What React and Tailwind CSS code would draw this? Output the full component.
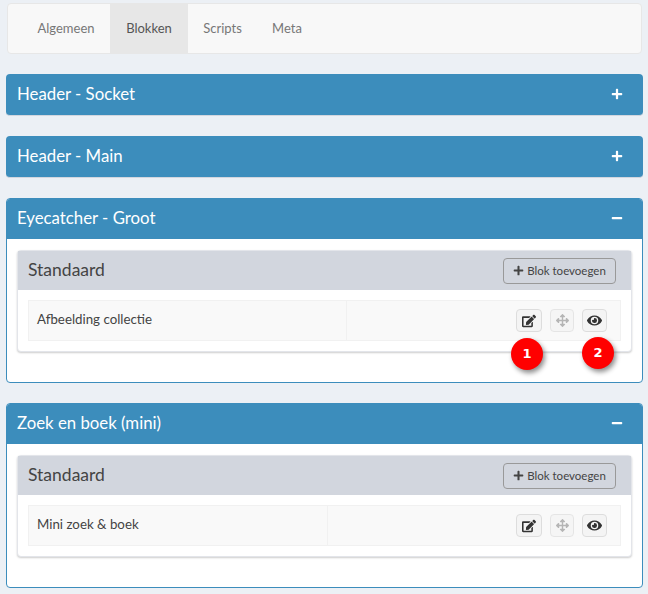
import { FaPlus, FaMinus, FaEdit, FaArrowsAlt, FaEye } from 'react-icons/fa';

const font = "font-['Lato','Open_Sans',sans-serif]";

const Tabs = () => (
  <div className="mx-[1px] h-[51px] flex pl-[14px] bg-[#f8f8f8] border border-[#e7e7e7] rounded text-[13px] text-[#777]">
    <div className="w-[88px] flex items-center justify-center">Algemeen</div>
    <div className="w-[78px] flex items-center justify-center bg-[#e7e7e7] text-[#555]">Blokken</div>
    <div className="w-[69px] flex items-center justify-center">Scripts</div>
    <div className="w-[60px] flex items-center justify-center">Meta</div>
  </div>
);

const ClosedPanel = ({ title }) => (
  <div className="mt-5 h-[42px] flex items-center justify-between pl-[11px] pr-5 pb-[2px] bg-[#3c8dbc] rounded text-white text-[16.8px] border-b border-[#d2d6de]">
    <span>{title}</span>
    <FaPlus className="text-[12px]" />
  </div>
);

const Row = ({ name, splitWidth, marker }) => (
  <div className="relative mx-[10px] mt-[10px] h-[41px] flex bg-[#f9f9f9] border border-[#f1f1f1] text-[13.3px] text-[#444]">
    <div className="flex items-center pl-2 pb-px" style={{ width: splitWidth }}>{name}</div>
    <div className="flex-1 flex items-center justify-end gap-2 pr-[13px] border-l border-[#f1f1f1]">
      <div className="w-[26px] h-[23px] flex items-center justify-center bg-[#f4f4f4] border border-[#ddd] rounded text-[#333]">
        <FaEdit className="text-[14px]" />
      </div>
      <div className="w-[24px] h-[23px] flex items-center justify-center bg-[#f4f4f4] border border-[#ddd] rounded text-[#999] opacity-70">
        <FaArrowsAlt className="text-[13px]" />
      </div>
      <div className="w-[25px] h-[23px] flex items-center justify-center bg-[#f4f4f4] border border-[#ddd] rounded text-[#333]">
        <FaEye className="text-[15px]" />
      </div>
    </div>
    {marker && (
      <>
        <div className="absolute left-[482px] top-[37px] w-8 h-8 flex items-center justify-center rounded-full bg-[#f00] text-white text-[13px] font-bold font-['DejaVu_Sans',sans-serif] shadow-[2px_3px_5px_rgba(0,0,0,0.45)]">1</div>
        <div className="absolute left-[553px] top-[36px] w-8 h-8 flex items-center justify-center rounded-full bg-[#f00] text-white text-[13px] font-bold font-['DejaVu_Sans',sans-serif] shadow-[2px_3px_5px_rgba(0,0,0,0.45)]">2</div>
      </>
    )}
  </div>
);

const OpenPanel = ({ title, name, splitWidth, marker }) => (
  <div className="mt-5 h-[185px] bg-white border border-[#3c8dbc] rounded overflow-hidden">
    <div className="h-[40px] flex items-center justify-between pl-[10px] pr-[19px] pb-[3px] bg-[#3c8dbc] text-white text-[16.8px]">
      <span>{title}</span>
      <FaMinus className="text-[12px]" />
    </div>
    <div className="mx-[10px] mt-[11px] h-[102px] bg-white rounded border border-[#e3e5ea] shadow-[0_1px_2px_rgba(0,0,0,0.2)]">
      <div className="h-[39px] flex items-center justify-between pl-[10px] pr-[15px] bg-[#d2d6de] text-[#444] text-[17.5px]">
        <span>Standaard</span>
        <div className="w-[113px] h-[26px] flex items-center justify-center gap-[3px] border border-[#999] rounded text-[11.5px] text-[#444]">
          <FaPlus className="text-[11px]" />
          <span>Blok toevoegen</span>
        </div>
      </div>
      <Row name={name} splitWidth={splitWidth} marker={marker} />
    </div>
  </div>
);

const App = () => (
  <div className={`h-[594px] overflow-hidden bg-[#ecf0f5] pt-[3px] pl-[6px] pr-[5px] ${font}`}>
    <Tabs />
    <ClosedPanel title="Header - Socket" />
    <ClosedPanel title="Header - Main" />
    <OpenPanel title="Eyecatcher - Groot" name="Afbeelding collectie" splitWidth={317} marker />
    <OpenPanel title="Zoek en boek (mini)" name="Mini zoek & boek" splitWidth={298} />
  </div>
);

export default App;
